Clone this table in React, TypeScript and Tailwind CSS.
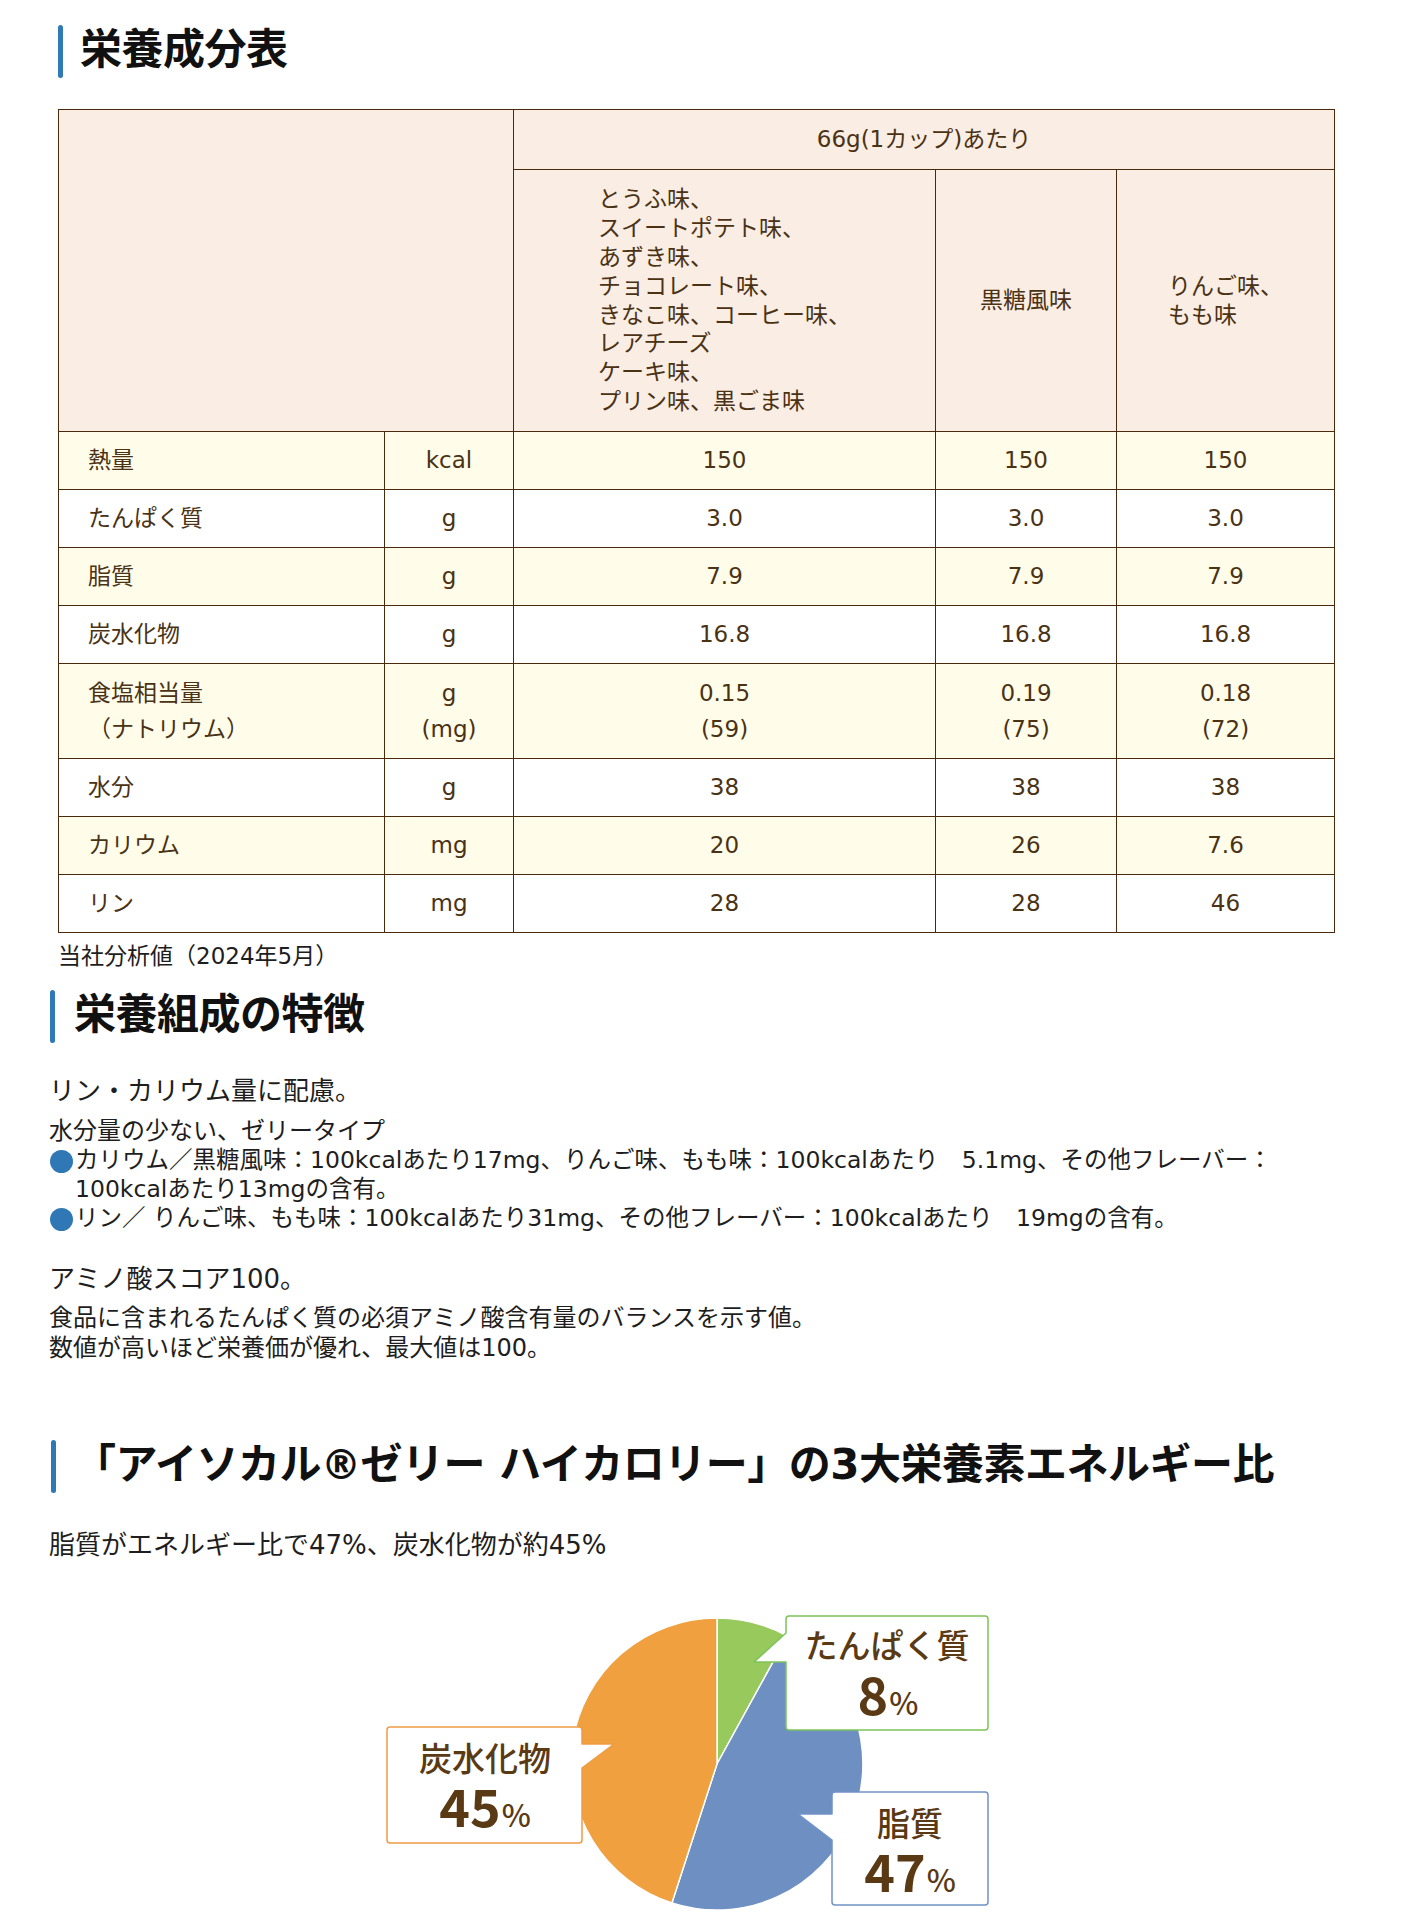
const cellBorder = "border border-[#4a2a0a]";

type Row = {
  label: string[];
  unit: string[];
  values: string[][];
  yellow: boolean;
};

const rows: Row[] = [
  { label: ["熱量"], unit: ["kcal"], values: [["150"], ["150"], ["150"]], yellow: true },
  { label: ["たんぱく質"], unit: ["g"], values: [["3.0"], ["3.0"], ["3.0"]], yellow: false },
  { label: ["脂質"], unit: ["g"], values: [["7.9"], ["7.9"], ["7.9"]], yellow: true },
  { label: ["炭水化物"], unit: ["g"], values: [["16.8"], ["16.8"], ["16.8"]], yellow: false },
  {
    label: ["食塩相当量", "（ナトリウム）"],
    unit: ["g", "(mg)"],
    values: [["0.15", "(59)"], ["0.19", "(75)"], ["0.18", "(72)"]],
    yellow: true,
  },
  { label: ["水分"], unit: ["g"], values: [["38"], ["38"], ["38"]], yellow: false },
  { label: ["カリウム"], unit: ["mg"], values: [["20"], ["26"], ["7.6"]], yellow: true },
  { label: ["リン"], unit: ["mg"], values: [["28"], ["28"], ["46"]], yellow: false },
];

function Lines({ lines }: { lines: string[] }) {
  return (
    <>
      {lines.map((l, i) => (
        <span key={i} className="block">
          {l}
        </span>
      ))}
    </>
  );
}

function Heading({ children, className }: { children: React.ReactNode; className: string }) {
  return (
    <h2 className={"flex h-[53px] items-center " + className}>
      <span className="h-full w-[5px] shrink-0 rounded-full bg-[#2f7ab5]" />
      <span className="pb-[3px] text-[42px] font-bold leading-none tracking-[-0.5px] text-[#111]">{children}</span>
    </h2>
  );
}

function NutritionTable() {
  return (
    <table className="mt-[31px] ml-[58px] w-[1276px] table-fixed border-collapse text-[23px] leading-[1.25] text-[#4a3215]">
      <colgroup>
        <col className="w-[326px]" />
        <col className="w-[129px]" />
        <col className="w-[422px]" />
        <col className="w-[181px]" />
        <col className="w-[218px]" />
      </colgroup>
      <thead>
        <tr className="bg-[#faede3]">
          <th rowSpan={2} colSpan={2} className={cellBorder} />
          <th colSpan={3} className={cellBorder + " h-[60px] font-normal"}>
            66g(1カップ)あたり
          </th>
        </tr>
        <tr className="bg-[#faede3]">
          <th className={cellBorder + " h-[262px] font-normal"}>
            <div className="inline-block text-left leading-[28.8px]">
              <Lines
                lines={[
                  "とうふ味、",
                  "スイートポテト味、",
                  "あずき味、",
                  "チョコレート味、",
                  "きなこ味、コーヒー味、",
                  "レアチーズ",
                  "ケーキ味、",
                  "プリン味、黒ごま味",
                ]}
              />
            </div>
          </th>
          <th className={cellBorder + " font-normal"}>黒糖風味</th>
          <th className={cellBorder + " font-normal"}>
            <div className="inline-block text-left leading-[28.8px]">
              <Lines lines={["りんご味、", "もも味"]} />
            </div>
          </th>
        </tr>
      </thead>
      <tbody>
        {rows.map((r, i) => {
          const double = r.label.length > 1;
          const h = double ? "h-[95px] leading-[36px]" : "h-[58px]";
          const bg = r.yellow ? "bg-[#fffde9]" : "bg-white";
          return (
            <tr key={i} className={bg}>
              <td className={cellBorder + " pl-[29px] text-left " + h}>
                <Lines lines={r.label} />
              </td>
              <td className={cellBorder + " text-center " + h}>
                <Lines lines={r.unit} />
              </td>
              {r.values.map((v, j) => (
                <td key={j} className={cellBorder + " text-center " + h}>
                  <Lines lines={v} />
                </td>
              ))}
            </tr>
          );
        })}
      </tbody>
    </table>
  );
}

function Bullet() {
  return <span className="mt-[4px] mr-[2px] ml-[1px] h-[23px] w-[23px] shrink-0 rounded-full bg-[#2f78b5]" />;
}

function PieChart() {
  const brown = "#5a3a14";
  return (
    <svg
      width="620"
      height="312"
      viewBox="0 0 620 312"
      className="mt-[48px] ml-[380px] block font-['Noto_Sans_CJK_JP',sans-serif]"
    >
      <g stroke="#fff" strokeWidth="1.5" strokeLinejoin="round">
        <path d="M337,154 L337,8 A146,146 0 0 1 407.3,26.1 Z" fill="#97c95c" />
        <path d="M337,154 L407.3,26.1 A146,146 0 0 1 291.9,292.9 Z" fill="#6d8fc1" />
        <path d="M337,154 L291.9,292.9 A146,146 0 0 1 337,8 Z" fill="#f0a03e" />
      </g>
      <g fill="#fff" strokeWidth="1.5" strokeLinejoin="round">
        <path
          d="M409,6 H605 A3,3 0 0 1 608,9 V117 A3,3 0 0 1 605,120 H409 A3,3 0 0 1 406,117 V52 H374 L406,23 V9 A3,3 0 0 1 409,6 Z"
          stroke="#7cc35a"
        />
        <path
          d="M10,117 H199 A3,3 0 0 1 202,120 V134 H234 L202,158 V230 A3,3 0 0 1 199,233 H10 A3,3 0 0 1 7,230 V120 A3,3 0 0 1 10,117 Z"
          stroke="#ef9b45"
        />
        <path
          d="M455,182 H605 A3,3 0 0 1 608,185 V292 A3,3 0 0 1 605,295 H455 A3,3 0 0 1 452,292 V230 L418,204 H452 V185 A3,3 0 0 1 455,182 Z"
          stroke="#7093c8"
        />
      </g>
      <g fill={brown} textAnchor="middle">
        <text x="507" y="48" fontSize="33" fontWeight="500">
          たんぱく質
        </text>
        <text x="508" y="105">
          <tspan fontSize="52" fontWeight="700">8</tspan>
          <tspan fontSize="31" fontWeight="500" dx="1">%</tspan>
        </text>
        <text x="105" y="161" fontSize="33" fontWeight="500">
          炭水化物
        </text>
        <text x="105" y="217">
          <tspan fontSize="52" fontWeight="700">45</tspan>
          <tspan fontSize="31" fontWeight="500" dx="1">%</tspan>
        </text>
        <text x="530" y="226" fontSize="33" fontWeight="500">
          脂質
        </text>
        <text x="530" y="282">
          <tspan fontSize="52" fontWeight="700">47</tspan>
          <tspan fontSize="31" fontWeight="500" dx="1">%</tspan>
        </text>
      </g>
    </svg>
  );
}

export default function App() {
  return (
    <div className="min-h-[1922px] w-[1402px] overflow-hidden bg-white pt-[25px] font-['DejaVu_Sans','Noto_Sans_CJK_JP',sans-serif] text-[#1e1e1e]">
      <Heading className="ml-[58px] gap-[17px]">栄養成分表</Heading>

      <NutritionTable />

      <p className="mt-[8px] ml-[58px] text-[23px] leading-[30px]">当社分析値（2024年5月）</p>

      <Heading className="mt-[19px] ml-[50px] gap-[19px]">栄養組成の特徴</Heading>

      <div className="ml-[49px]">
        <p className="mt-[31px] text-[26px] leading-[34px]">リン・カリウム量に配慮。</p>
        <p className="mt-[8px] text-[24px] leading-[30px]">水分量の少ない、ゼリータイプ</p>
        <div className="text-[23.5px] leading-[29px]">
          <div className="flex">
            <Bullet />
            <p className="whitespace-nowrap">
              カリウム／黒糖風味：100kcalあたり17mg、りんご味、もも味：100kcalあたり　5.1mg、その他フレーバー：
              <br />
              100kcalあたり13mgの含有。
            </p>
          </div>
          <div className="flex">
            <Bullet />
            <p className="whitespace-nowrap">
              リン／ りんご味、もも味：100kcalあたり31mg、その他フレーバー：100kcalあたり　19mgの含有。
            </p>
          </div>
        </div>
        <p className="mt-[29px] text-[26px] leading-[34px]">アミノ酸スコア100。</p>
        <p className="mt-[7px] text-[24px] leading-[30px]">
          食品に含まれるたんぱく質の必須アミノ酸含有量のバランスを示す値。
          <br />
          数値が高いほど栄養価が優れ、最大値は100。
        </p>
      </div>

      <Heading className="mt-[77px] ml-[51px] gap-[18px]">
        「アイソカル<span className="text-[40px]">®</span>ゼリー ハイカロリー」の3大栄養素エネルギー比
      </Heading>

      <p className="mt-[35px] ml-[49px] text-[26px] leading-[34px]">脂質がエネルギー比で47%、炭水化物が約45%</p>

      <PieChart />
    </div>
  );
}
